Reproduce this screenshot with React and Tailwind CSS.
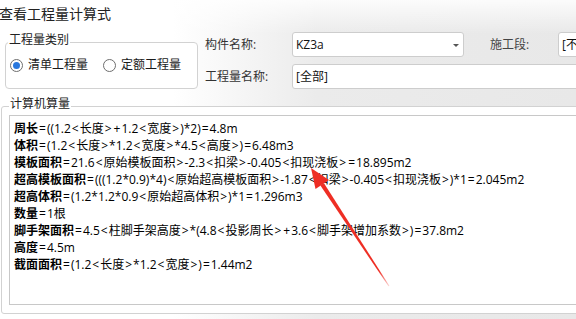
import React from "react";

const lines = [
  ["周长", "=((1.2<长度>+1.2<宽度>)*2)=4.8m"],
  ["体积", "=(1.2<长度>*1.2<宽度>*4.5<高度>)=6.48m3"],
  ["模板面积", "=21.6<原始模板面积>-2.3<扣梁>-0.405<扣现浇板>=18.895m2"],
  ["超高模板面积", "=(((1.2*0.9)*4)<原始超高模板面积>-1.87<扣梁>-0.405<扣现浇板>)*1=2.045m2"],
  ["超高体积", "=(1.2*1.2*0.9<原始超高体积>)*1=1.296m3"],
  ["数量", "=1根"],
  ["脚手架面积", "=4.5<柱脚手架高度>*(4.8<投影周长>+3.6<脚手架增加系数>)=37.8m2"],
  ["高度", "=4.5m"],
  ["截面面积", "=(1.2<长度>*1.2<宽度>)=1.44m2"],
];

// operators get a little air on both sides, like the YaHei/Segoe glyphs
const Formula = ({ text }) =>
  text
    .split(/([<>=+])/)
    .filter(Boolean)
    .map((s, i) =>
      /^[<>=+]$/.test(s) ? (
        <span key={i} className="px-[1px]">{s}</span>
      ) : (
        <span key={i}>{s}</span>
      )
    );

const Radio = ({ checked, label, className = "" }) => (
  <div className={`flex items-center shrink-0 ${className}`}>
    <span className="w-[13px] h-[13px] rounded-full border border-[#6e6e6e] bg-white flex items-center justify-center">
      {checked && <span className="w-[7px] h-[7px] rounded-full bg-[#2a78de]"></span>}
    </span>
    <span className="ml-[5px] text-[12px] text-[#1a1a1a] whitespace-nowrap">{label}</span>
  </div>
);

const App = () => {
  return (
    <div
      className="relative w-[576px] h-[319px] overflow-hidden flex flex-col bg-[linear-gradient(to_bottom,rgba(255,255,255,0.85),rgba(255,255,255,0)_34px),linear-gradient(to_right,#ffffff_30%,#ebebeb_55%,#e8e8e8_100%)]"
      style={{ fontFamily: '"Open Sans", "Noto Sans CJK SC", sans-serif' }}>
      {/* title */}
      <div className="h-[32px] pt-[4px] text-[14px] leading-[20px] text-[#222] -ml-[1px] shrink-0">查看工程量计算式</div>

      {/* top row */}
      <div className="flex h-[57px] shrink-0">
        <fieldset className="shrink-0 mt-[2px] ml-[5px] w-[193px] h-[55px] border border-[#d2d2d2] rounded-[4px] bg-white">
          <legend className="ml-[2px] px-[1px] text-[12px] leading-[12px] pb-[4px] text-[#222]">工程量类别</legend>
          <div className="flex items-center h-[20px] mt-[5px] pl-[4px]">
            <Radio checked label="清单工程量" />
            <Radio label="定额工程量" className="ml-[15px]" />
          </div>
        </fieldset>

        <div className="shrink-0 ml-[7px] flex flex-col">
          <div className="flex items-center h-[25px]">
            <span className="shrink-0 w-[87px] text-[12px] text-[#333]">构件名称:</span>
            <div className="shrink-0 relative w-[172px] h-[25px] bg-white border border-[#cdcdcd] rounded-[3px] flex items-center pl-[3px] text-[12px] text-[#111]">
              KZ3a
              <span className="absolute right-[4px] top-[11px] w-0 h-0 border-l-[3px] border-r-[3px] border-t-[3px] border-l-transparent border-r-transparent border-t-[#555]"></span>
            </div>
            <span className="shrink-0 ml-[26px] w-[68px] text-[12px] text-[#444]">施工段:</span>
            <div className="shrink-0 w-[80px] h-[25px] bg-white border border-[#cdcdcd] rounded-[3px] flex items-center pl-[3px] text-[12px] text-[#111] whitespace-nowrap">
              [不区分]
            </div>
          </div>
          <div className="flex items-center h-[25px] mt-[7px]">
            <span className="shrink-0 w-[87px] text-[12px] text-[#333]">工程量名称:</span>
            <div className="shrink-0 w-[320px] h-[25px] bg-white border border-[#cdcdcd] rounded-[3px] flex items-center pl-[3px] text-[12px] text-[#111]">
              [全部]
            </div>
          </div>
        </div>
      </div>

      {/* computed quantities */}
      <fieldset className="shrink-0 mt-[9px] ml-[1px] w-[600px] h-[216px] border border-[#d2d2d2] rounded-[3px] bg-white">
        <legend className="ml-[7px] px-[1px] text-[12px] leading-[12px] pb-[4px] text-[#222]">计算机算量</legend>
        <div className="mt-[1px] ml-[7px] h-[190px] border border-[#c8c8c8] bg-white pt-[4px] pl-[4px]">
          {lines.map(([label, rest], i) => (
            <div key={i} className="h-[17px] leading-[17px] text-[12px] text-black whitespace-nowrap">
              <span className="font-bold">{label}</span>
              <Formula text={rest} />
            </div>
          ))}
        </div>
      </fieldset>

      {/* red annotation arrow */}
      <svg className="absolute left-0 top-0 pointer-events-none" width="576" height="319" viewBox="0 0 576 319">
        <defs>
          <linearGradient id="fade" x1="322" y1="185" x2="389" y2="286" gradientUnits="userSpaceOnUse">
            <stop offset="0" stopColor="#ee2e24" />
            <stop offset="0.85" stopColor="#ee2e24" />
            <stop offset="1" stopColor="#ee2e24" stopOpacity="0.2" />
          </linearGradient>
        </defs>
        <polygon points="311,168 329,180 315.5,189" fill="#ee2e24" />
        <polygon points="320.4,185.5 324,183.2 389.5,286 388.5,286.3" fill="url(#fade)" />
      </svg>
    </div>
  );
};

export default App;
